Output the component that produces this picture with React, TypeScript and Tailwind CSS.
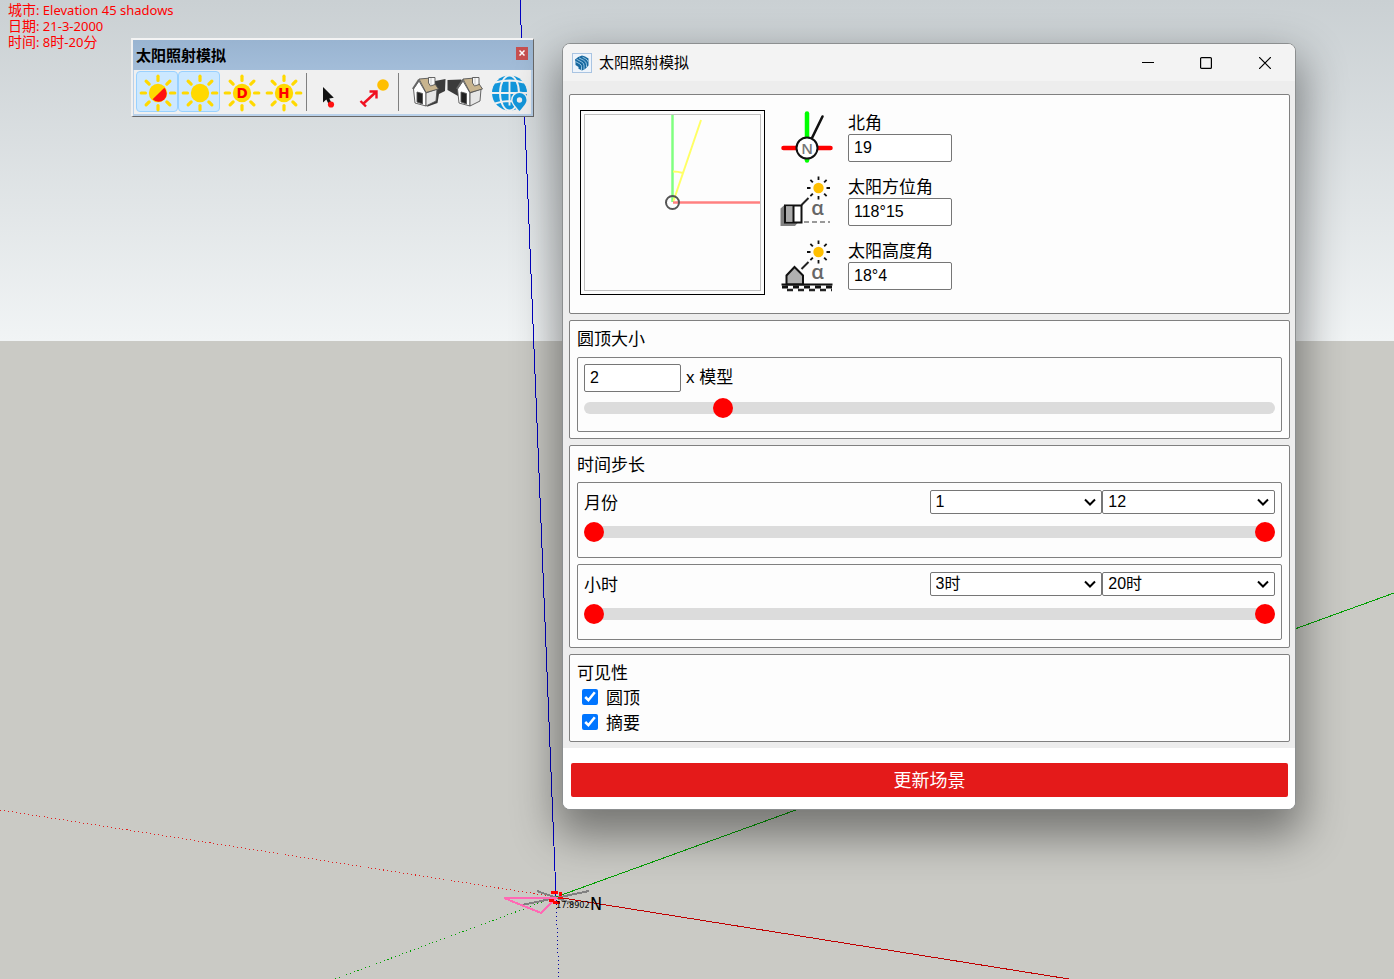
import { useState } from 'react'
import type { ChangeEvent, ReactNode } from 'react'

const MONTHS = Array.from({ length: 12 }, (_, i) => ({ value: i + 1, label: `${i + 1}` }))
const HOURS = Array.from({ length: 18 }, (_, i) => ({ value: i + 3, label: `${i + 3}时` }))

const RAYS = [0, 45, 90, 135, 180, 225, 270, 315]

/* ---------- toolbar icons ---------- */

function SunIcon({ letter, half }: { letter?: string; half?: boolean }) {
  return (
    <svg width="38" height="38" viewBox="-19 -19 38 38" aria-hidden="true">
      {RAYS.map(a => (
        <line key={a} x1="0" y1="-12.5" x2="0" y2="-16.8" stroke="#ffd900" strokeWidth="3.2" strokeLinecap="round" transform={`rotate(${a})`} />
      ))}
      <circle r="9.2" fill="#ffd900" />
      {half && <path d="M6.4 -5.2 A 8 8 0 0 1 -5.4 6.2 Z" fill="#f11" />}
      {letter && (
        <text x="0" y="5" textAnchor="middle" fontSize="13.5" fontWeight="bold" fill="#f00" fontFamily="DejaVu Sans, sans-serif">{letter}</text>
      )}
    </svg>
  )
}

function PointerIcon() {
  return (
    <svg width="38" height="38" viewBox="0 0 38 38" aria-hidden="true">
      <path d="M11 13v15.500l3.300-3 3 6 2.800-1.300-2.800-5.700 4.500-.7z" fill="#111" />
      <circle cx="19" cy="30.500" r="3.100" fill="#f11" />
    </svg>
  )
}

function SunDistanceIcon() {
  return (
    <svg width="38" height="38" viewBox="0 0 38 38" fill="none" aria-hidden="true">
      <path d="M9 30 22 18M6.500 27l5.500 5.500M15.500 17.500h7v7" stroke="#f01020" strokeWidth="2.400" />
      <circle cx="29" cy="11" r="5.800" fill="#ffbf00" />
    </svg>
  )
}

function HouseIcon({ mirrored }: { mirrored?: boolean }) {
  return (
    <svg width="36" height="36" viewBox="0 0 36 36" strokeLinejoin="round" aria-hidden="true">
      {mirrored
        ? <path d="M.5 5 14 4.500 16 8 11 21 .5 15z" fill="#3b3b3b" />
        : <path d="M24 6 34.500 4 34 16 28 19 26.500 28 16 31.700z" fill="#3b3b3b" />}
      <g transform={mirrored ? 'translate(8 0)' : undefined} stroke="#555" strokeWidth=".9">
        <path d="M2.500 14 8 6 15 18V31L4 28z" fill="#fff" />
        <path d="M15 18 26 14 25 26 15 31z" fill="#e6e6e6" />
        <path d="M8 4 20 3 27.500 14 15 17.500z" fill="#c8b48e" />
        <path d="M8 4.500 1.800 14" fill="none" stroke="#666" strokeWidth="1.800" />
        <path d="M17.500 2.500H24V9.500L19.500 11 17.500 8z" fill="#f8f8f8" />
        <path d="M20 3v7.500" stroke="#aaa" strokeWidth=".6" />
        <path d="M6 17 11.500 18.500V29L6 27z" fill="#222" />
      </g>
    </svg>
  )
}

function GlobeIcon() {
  return (
    <svg width="38" height="38" viewBox="0 0 38 38" aria-hidden="true">
      <circle cx="18.500" cy="19" r="17.500" fill="#1296db" />
      <g fill="none" stroke="#f0f0f0" strokeWidth="1.900">
        <ellipse cx="18.500" cy="19" rx="9.500" ry="17.500" />
        <path d="M18.500 6.500v25M1 19h36M4 8.500q14.500-4 29 0M4 29.500q14.500-5 29 0" />
      </g>
      <path d="M28.500 37C24 32 21.500 29 21.500 26a7 7 0 0 1 14 0C35.500 29 33 32 28.500 37z" fill="#1296db" stroke="#f0f0f0" strokeWidth="3" paintOrder="stroke" />
      <circle cx="28.500" cy="26" r="2.700" fill="#f0f0f0" />
    </svg>
  )
}

function ToolButton({ label, active, narrow, children }: { label: string; active?: boolean; narrow?: boolean; children: ReactNode }) {
  return (
    <button
      type="button"
      aria-label={label}
      aria-pressed={active}
      className={`flex h-[41px] items-center justify-center rounded-sm border pl-0.5 pt-0.5 ${narrow ? 'w-9' : 'w-[42px]'} ${active ? 'border-[#99d1ff] bg-[#cce8ff]' : 'border-transparent'}`}
    >
      <span className="shrink-0">{children}</span>
    </button>
  )
}

function Toolbar() {
  return (
    <div className="absolute left-[131px] top-[38px] border-b border-l-2 border-r border-t-2 border-[#696969] border-l-[#f0f0f0] border-t-[#f4f4f4] bg-[#b9d1ea] pb-0.5 pl-px pr-0.5">
      <div className="-ml-px -mr-0.5 flex h-[30px] items-center justify-between bg-linear-to-b from-[#99b4d1] to-[#a3bdd9] pl-[3px] pr-[5px]">
        <span className="font-['Noto_Sans_CJK_SC',sans-serif] text-[15px] font-bold leading-5">太阳照射模拟</span>
        <button type="button" aria-label="关闭" className="mb-1 flex h-[13px] w-3 items-center justify-center bg-[#c75050]">
          <svg width="6" height="6" viewBox="0 0 6 6" stroke="#fff" strokeWidth="1.500" aria-hidden="true"><path d="M.5.5l5 5M5.500.5l-5 5" /></svg>
        </button>
      </div>
      <div className="flex items-center bg-[#f0f0f0] pb-0.5 pl-0.5 pr-px pt-px">
        <ToolButton label="阴影" active><SunIcon half /></ToolButton>
        <ToolButton label="太阳" active><SunIcon /></ToolButton>
        <ToolButton label="日期"><SunIcon letter="D" /></ToolButton>
        <ToolButton label="小时"><SunIcon letter="H" /></ToolButton>
        <div className="mx-0.5 h-[38px] w-px bg-[#808080]" />
        <ToolButton label="选择"><PointerIcon /></ToolButton>
        <ToolButton label="移动太阳"><SunDistanceIcon /></ToolButton>
        <div className="mx-[5px] h-[38px] w-px bg-[#808080]" />
        <div className="flex px-1.5">
          <ToolButton label="前一视图" narrow><HouseIcon /></ToolButton>
          <ToolButton label="后一视图" narrow><HouseIcon mirrored /></ToolButton>
        </div>
        <ToolButton label="地理位置"><GlobeIcon /></ToolButton>
      </div>
    </div>
  )
}

/* ---------- dialog drawings ---------- */

function AppLogo() {
  return (
    <svg width="20" height="20" viewBox="0 0 20 20" fill="none" aria-hidden="true">
      <rect x=".5" y=".5" width="19" height="19" fill="#eef4fb" stroke="#a9c4e2" />
      <path d="M10 2.500Q13 3 16.500 5.500V12.500Q14 16 10 17.500L6.500 15.800V14L3.500 12V9.500L3 6.500Q6 3.500 10 2.500z" fill="#17689f" />
      <path d="M3.500 8.500 8 11q1.500 1 1.500 2.500V17M4.500 6.200l5 2.700q2.500 1.300 2.500 3.600v4M7 4.900l4.500 2.300q3 1.600 3 4.300v2.500M10.500 4.200l3 1.500q2 1 2.500 3" stroke="#b5dbf3" strokeWidth=".8" />
    </svg>
  )
}

function Compass() {
  return (
    <div className="size-[185px] shrink-0 border border-black p-[3px]">
      <svg className="block border border-[#c0c0c0]" width="177" height="177" viewBox="0 0 175 175" fill="none" aria-label="方位图">
        <path d="M87.500 0V87" stroke="#80ff80" strokeWidth="2.500" />
        <path d="M88 87.500H175" stroke="#ff8080" strokeWidth="2.500" />
        <path d="M88.500 86 116 5M88 56.500q5 0 10 1.500" stroke="#ffff66" strokeWidth="2" />
        <circle cx="87.500" cy="87.500" r="6.500" stroke="#555" strokeWidth="2" />
      </svg>
    </div>
  )
}

function NorthIcon() {
  return (
    <svg width="54" height="54" viewBox="0 0 54 54" strokeLinecap="round" aria-hidden="true">
      <path d="M27 3.500v47" stroke="#0f0" strokeWidth="4.500" />
      <path d="M3.500 38h47" stroke="#f00" strokeWidth="4.500" />
      <path d="M31.500 29 42.500 6.500" stroke="#111" strokeWidth="2.600" />
      <circle cx="27" cy="38" r="10.500" fill="#fff" stroke="#111" strokeWidth="2" />
      <text x="27" y="43.500" textAnchor="middle" fontSize="15" fontWeight="600" fill="#777" fontFamily="Open Sans, sans-serif">N</text>
    </svg>
  )
}

function SmallSun() {
  return (
    <g transform="translate(38.500 12.500)">
      {RAYS.map(a => (
        <line key={a} x1="0" y1="-8" x2="0" y2="-11.500" stroke="#111" strokeWidth="1.800" transform={`rotate(${a})`} />
      ))}
      <circle r="5.200" fill="#ffbf00" />
    </g>
  )
}

function Alpha() {
  return <text x="37.500" y="39.500" textAnchor="middle" fontSize="20" fontWeight="600" fill="#666" fontFamily="Open Sans, sans-serif">α</text>
}

function AzimuthIcon() {
  return (
    <svg width="54" height="54" viewBox="0 -1.500 54 54" aria-hidden="true">
      <SmallSun />
      <path d="M0.500 33 5 29V47H18L15 50.500H.5z" fill="#808080" />
      <path d="M21.500 29.500 28.500 22.500" stroke="#222" strokeWidth="2" />
      <rect x="5" y="30" width="16.500" height="17" fill="#fff" stroke="#111" strokeWidth="2" />
      <rect x="6" y="31" width="7" height="15" fill="#aaa" />
      <path d="M13.500 30v17" stroke="#111" strokeWidth="2" />
      <path d="M24 46.500h26" stroke="#999" strokeWidth="1.800" strokeDasharray="5 3" />
      <Alpha />
    </svg>
  )
}

function AltitudeIcon() {
  return (
    <svg width="54" height="54" viewBox="0 -1.500 54 54" aria-hidden="true">
      <SmallSun />
      <path d="M21.500 29.500 28.500 22.500" stroke="#222" strokeWidth="2" />
      <path d="M6.500 45V36L14.500 27.500 23 36V45z" fill="#b0b0b0" stroke="#111" strokeWidth="2" />
      <path d="M1.500 45h51" stroke="#111" strokeWidth="2" />
      <path d="M2 47.500h50" stroke="#111" strokeWidth="3" strokeDasharray="6 5" />
      <path d="M7 50.500h45" stroke="#222" strokeWidth="2.500" strokeDasharray="6 5" />
      <Alpha />
    </svg>
  )
}

/* ---------- dialog parts ---------- */

const box = 'rounded-xs border border-[#808080] bg-[#fdfdfd]'
const field = 'h-7 rounded-xs border border-[#767676] bg-white px-[5px] text-base'
const thumb =
  'appearance-none bg-transparent [&::-webkit-slider-thumb]:appearance-none [&::-webkit-slider-thumb]:size-5 [&::-webkit-slider-thumb]:rounded-full [&::-webkit-slider-thumb]:bg-[#ff0000]'

function AngleField({ id, label, value, icon }: { id: string; label: string; value: string; icon: ReactNode }) {
  return (
    <div className="flex gap-3.5">
      <div className="shrink-0">{icon}</div>
      <div className="flex flex-col">
        <label htmlFor={id} className="pt-1 leading-5">{label}</label>
        <input id={id} defaultValue={value} className={`${field} w-[104px]`} />
      </div>
    </div>
  )
}

type Option = { value: number; label: string }

function Select({ id, label, value, options, onChange }: { id?: string; label?: string; value: number; options: Option[]; onChange: (v: number) => void }) {
  return (
    <div className="relative flex-1">
      <select
        id={id}
        aria-label={label}
        value={value}
        onChange={(e: ChangeEvent<HTMLSelectElement>) => onChange(+e.target.value)}
        className="block h-6 w-full appearance-none rounded-xs border border-[#767676] bg-white px-[5px] text-base leading-5"
      >
        {options.map(o => <option key={o.value} value={o.value}>{o.label}</option>)}
      </select>
      <svg className="pointer-events-none absolute right-1.5 top-2" width="12" height="8" viewBox="0 0 12 8" fill="none" stroke="#000" strokeWidth="2" aria-hidden="true">
        <path d="M1 1.500 6 6.500 11 1.500" />
      </svg>
    </div>
  )
}

function RangeRow({ id, label, options }: { id: string; label: string; options: Option[] }) {
  const min = options[0].value
  const max = options[options.length - 1].value
  const [from, setFrom] = useState(min)
  const [to, setTo] = useState(max)

  const handle = `${thumb} pointer-events-none [grid-area:1/1] w-full h-5 [&::-webkit-slider-thumb]:pointer-events-auto`

  return (
    <div className={`${box} px-1.5 pb-[15px] pt-[7px]`}>
      <div className="flex items-center">
        <label htmlFor={`${id}-from`} className="flex-1 pt-1 leading-5">{label}</label>
        <div className="flex w-1/2">
          <Select id={`${id}-from`} value={from} options={options} onChange={setFrom} />
          <Select label={`${label} 至`} value={to} options={options} onChange={setTo} />
        </div>
      </div>
      <div className="mt-2 grid items-center">
        <div className="h-3 rounded-full bg-[#dcdcdc] [grid-area:1/1]" />
        <input type="range" aria-label={`${label} 起`} min={min} max={max} value={from} onChange={e => setFrom(+e.target.value)} className={handle} />
        <input type="range" aria-label={`${label} 止`} min={min} max={max} value={to} onChange={e => setTo(+e.target.value)} className={handle} />
      </div>
    </div>
  )
}

function Check({ id, label }: { id: string; label: string }) {
  return (
    <div className="flex h-[25px] items-center gap-2 pl-[5px]">
      <input id={id} type="checkbox" defaultChecked className="size-4 accent-[#0075ff]" />
      <label htmlFor={id} className="pt-1 leading-5">{label}</label>
    </div>
  )
}

function Dialog() {
  const [size, setSize] = useState('2')

  return (
    <div role="dialog" aria-label="太阳照射模拟" className="absolute left-[562px] top-[43px] w-[734px] overflow-hidden rounded-lg border border-[#8c8f90] bg-white shadow-[0_20px_44px_6px_rgba(0,0,0,0.42)]">
      <div className="flex h-[37px] items-center bg-[#f3f3f3] pl-[9px]">
        <AppLogo />
        <span className="flex-1 pl-[7px] text-[15px] leading-5">太阳照射模拟</span>
        <button type="button" aria-label="最小化" className="flex h-full w-[58px] items-center justify-center">
          <svg width="12" height="12" viewBox="0 0 12 12" stroke="#000"><path d="M0 5.500h12" /></svg>
        </button>
        <button type="button" aria-label="最大化" className="flex h-full w-[58px] items-center justify-center">
          <svg width="12" height="12" viewBox="0 0 12 12" fill="none" stroke="#000" strokeWidth="1.200"><rect x=".6" y=".6" width="10.800" height="10.800" rx="1" /></svg>
        </button>
        <button type="button" aria-label="关闭" className="flex h-full w-[60px] items-center justify-center">
          <svg width="12" height="12" viewBox="0 0 12 12" stroke="#000" strokeWidth="1.200"><path d="M0 0l12 12M12 0L0 12" /></svg>
        </button>
      </div>

      <div className="flex flex-col gap-1.5 bg-[#ededed] pb-1.5 pl-1.5 pr-[5px] pt-[13px]">
        <section className={`${box} flex gap-[15px] px-2.5 pb-[18px] pt-[15px]`}>
          <Compass />
          <div className="flex flex-col gap-2.5">
            <AngleField id="north" label="北角" value="19" icon={<NorthIcon />} />
            <AngleField id="azimuth" label="太阳方位角" value="118°15" icon={<AzimuthIcon />} />
            <AngleField id="altitude" label="太阳高度角" value="18°4" icon={<AltitudeIcon />} />
          </div>
        </section>

        <section className={`${box} px-[7px] pb-1.5 pt-[9px]`}>
          <h2 className="mb-[7px] leading-5">圆顶大小</h2>
          <div className={`${box} px-1.5 pb-[13px] pt-1.5`}>
            <div className="flex items-center gap-[5px]">
              <input id="dome-size" value={size} onChange={e => setSize(e.target.value)} className={`${field} w-[97px]`} />
              <label htmlFor="dome-size" className="leading-6">x 模型</label>
            </div>
            <div className="mt-1.5 grid items-center">
              <div className="h-3 rounded-full bg-[#dcdcdc] [grid-area:1/1]" />
              <input type="range" aria-label="圆顶大小" min="0.1" max="10" step="0.1" value={+size || 0.1} onChange={e => setSize(e.target.value)} className={`${thumb} h-5 w-full [grid-area:1/1]`} />
            </div>
          </div>
        </section>

        <section className={`${box} flex flex-col gap-1.5 px-[7px] pb-[7px] pt-2.5`}>
          <h2 className="leading-5">时间步长</h2>
          <RangeRow id="month" label="月份" options={MONTHS} />
          <RangeRow id="hour" label="小时" options={HOURS} />
        </section>

        <section className={`${box} px-[7px] pb-[7px] pt-[9px]`}>
          <h2 className="leading-5">可见性</h2>
          <Check id="show-dome" label="圆顶" />
          <Check id="show-summary" label="摘要" />
        </section>
      </div>

      <div className="bg-white pb-3 pl-2 pr-[7px] pt-[15px]">
        <button type="button" className="h-[34px] w-full rounded-xs bg-[#e41a1a] pt-0.5 text-lg leading-6 text-white">更新场景</button>
      </div>
    </div>
  )
}

/* ---------- model viewport ---------- */

function Axes() {
  return (
    <svg className="absolute left-0 top-0" width="1394" height="979" viewBox="0 0 1394 979" fill="none" shapeRendering="crispEdges" aria-hidden="true">
      <path d="M520 0 556 896" stroke="#0000c0" />
      <path d="M556 897 1394 593" stroke="#00a000" />
      <path d="M556 897 1069 979" stroke="#c00000" />
      <path d="M0 810 556 897" stroke="#e02020" strokeDasharray="1 3" />
      <path d="M335 979 556 897" stroke="#00a000" strokeDasharray="1 3" />
      <path d="M556 900 559 979" stroke="#0000a0" strokeDasharray="1 3" />
      <path d="M537 891 574 904M522 905 589 891" stroke="#808080" strokeWidth="2" />
      <path d="M504 898H556L541 913z" stroke="#ff69b4" strokeWidth="2" />
      <path d="M551 892.500h7M560.500 892v4M549 900.500h5M553 902.500h7M558 898h5" stroke="#f00" strokeWidth="2.500" />
      <text x="556" y="908" fill="#000" fontFamily="DejaVu Sans Condensed, sans-serif" fontSize="9">17:8902</text>
      <text x="590" y="910" fill="#000" fontFamily="DejaVu Sans Condensed, sans-serif" fontSize="18">N</text>
    </svg>
  )
}

function SceneInfo() {
  const cjk = 'text-sm leading-4'
  return (
    <div className="absolute left-2 top-0.5 font-['Noto_Sans','Noto_Sans_CJK_SC',sans-serif] text-[13px] leading-4 text-[#ff0000]">
      <p><span className={cjk}>城市</span>: Elevation 45 shadows</p>
      <p><span className={cjk}>日期</span>: 21-3-2000</p>
      <p><span className={cjk}>时间</span>: 8<span className={cjk}>时</span>-20<span className={cjk}>分</span></p>
    </div>
  )
}

export default function App() {
  return (
    <main className="relative min-h-screen overflow-hidden bg-[#cacac5] font-['Liberation_Sans','Noto_Sans_CJK_SC',sans-serif] text-[17px] text-black">
      <div className="h-[341px] bg-linear-to-b from-[#cad0d3] to-[#f1f4f5]" />
      <Axes />
      <SceneInfo />
      <Toolbar />
      <Dialog />
    </main>
  )
}
